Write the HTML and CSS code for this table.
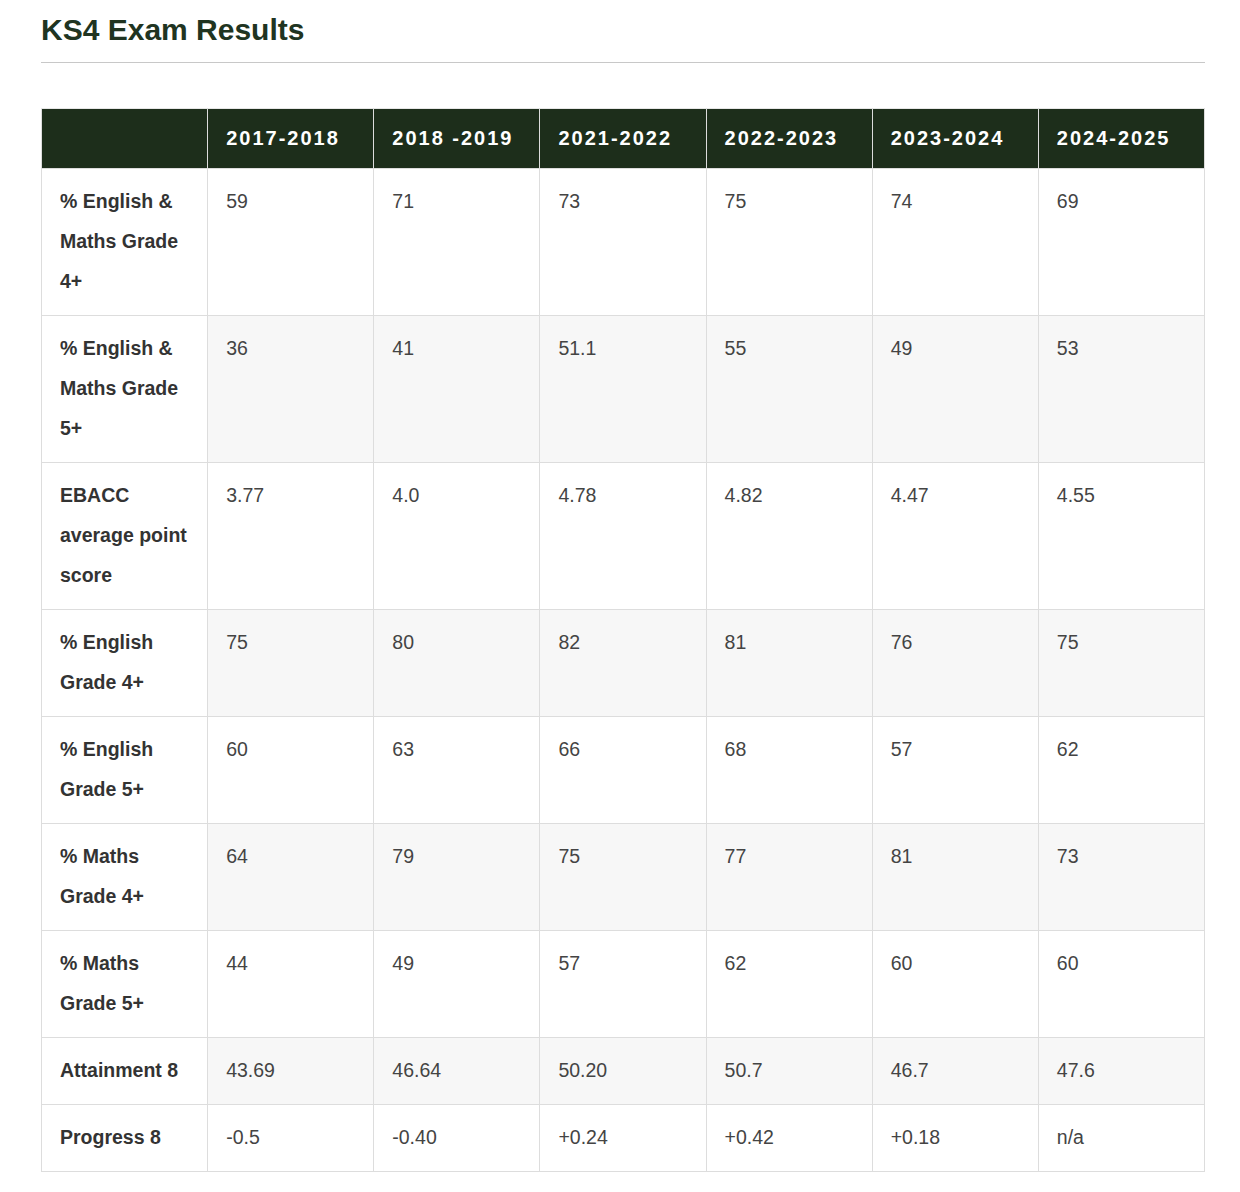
FILE: index.html
```html
<!DOCTYPE html>
<html lang="en">
<head>
<meta charset="utf-8">
<title>KS4 Exam Results</title>
<link rel="stylesheet" href="styles.css">
</head>
<body>
<main class="page">
  <h1 class="title">KS4 Exam Results</h1>
  <hr class="rule">
  <table class="results">
    <thead>
      <tr>
        <th></th>
        <th>2017-2018</th>
        <th>2018 -2019</th>
        <th>2021-2022</th>
        <th>2022-2023</th>
        <th>2023-2024</th>
        <th>2024-2025</th>
      </tr>
    </thead>
    <tbody>
      <tr><th>% English &amp; Maths Grade 4+</th><td>59</td><td>71</td><td>73</td><td>75</td><td>74</td><td>69</td></tr>
      <tr><th>% English &amp; Maths Grade 5+</th><td>36</td><td>41</td><td>51.1</td><td>55</td><td>49</td><td>53</td></tr>
      <tr><th>EBACC average point score</th><td>3.77</td><td>4.0</td><td>4.78</td><td>4.82</td><td>4.47</td><td>4.55</td></tr>
      <tr><th>% English Grade 4+</th><td>75</td><td>80</td><td>82</td><td>81</td><td>76</td><td>75</td></tr>
      <tr><th>% English Grade 5+</th><td>60</td><td>63</td><td>66</td><td>68</td><td>57</td><td>62</td></tr>
      <tr><th>% Maths Grade 4+</th><td>64</td><td>79</td><td>75</td><td>77</td><td>81</td><td>73</td></tr>
      <tr><th>% Maths Grade 5+</th><td>44</td><td>49</td><td>57</td><td>62</td><td>60</td><td>60</td></tr>
      <tr><th>Attainment 8</th><td>43.69</td><td>46.64</td><td>50.20</td><td>50.7</td><td>46.7</td><td>47.6</td></tr>
      <tr><th>Progress 8</th><td>-0.5</td><td>-0.40</td><td>+0.24</td><td>+0.42</td><td>+0.18</td><td>n/a</td></tr>
    </tbody>
  </table>
</main>
</body>
</html>
```
FILE: styles.css
```css
html, body {
  margin: 0;
  padding: 0;
  background: #ffffff;
}

body {
  font-family: "Liberation Sans", Arial, sans-serif;
  color: #333333;
}

.page {
  width: 1164px;
  padding: 13px 0 20px 41px;
}

.title {
  margin: 0;
  font-size: 30px;
  line-height: 34px;
  font-weight: 700;
  color: #203421;
}

.rule {
  margin: 15px 0 0;
  border: 0;
  border-top: 1px solid #c8c8c8;
  height: 0;
}

.results {
  margin-top: 45px;
  width: 1164px;
  border-collapse: collapse;
  table-layout: fixed;
  font-size: 19.5px;
  line-height: 40px;
}

.results th,
.results td {
  border: 1px solid #dddddd;
  padding: 12px 18px 14px;
  text-align: left;
  vertical-align: top;
}

.results thead th {
  background: #1d2e1b;
  color: #ffffff;
  font-size: 20px;
  letter-spacing: 2px;
  padding: 9px 18px 10px;
  border-color: #dcdcdc;
  border-top-color: #e6e6e6;
}

.results tbody th {
  font-weight: 700;
  color: #333333;
  background: #ffffff;
}

.results tbody td {
  font-weight: 400;
  color: #444444;
}

.results tbody tr:nth-child(even) td {
  background: #f7f7f7;
}
```
